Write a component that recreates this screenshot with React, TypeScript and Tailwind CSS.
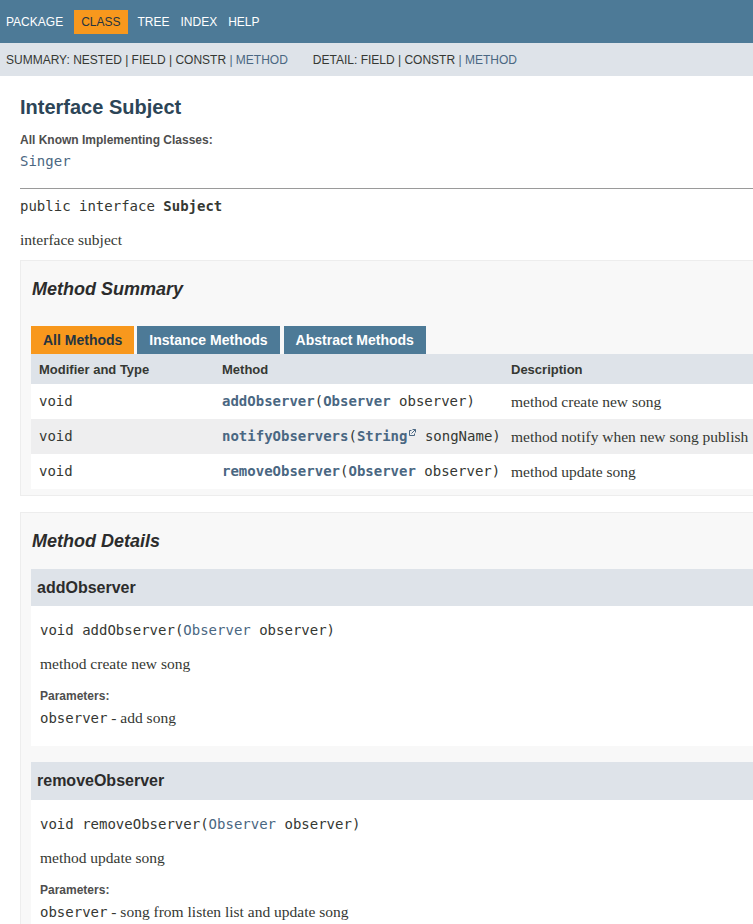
import React from "react";

const SANS = "font-['Liberation_Sans',Arial,sans-serif]";
const MONO = "font-['DejaVu_Sans_Mono',monospace]";
const SERIF = "font-['Liberation_Serif','Times_New_Roman',serif]";

function ExtLink() {
  return (
    <svg width="8" height="8" viewBox="0 0 8 8" className="inline-block self-start mt-[10px] ml-[1px]" fill="none" stroke="#4A6782" strokeWidth="1">
      <path d="M3.5 1.5H1.5V6.5H6.5V4.5" />
      <path d="M4.5 0.5H7.5V3.5" />
      <path d="M7.5 0.5L3.5 4.5" />
    </svg>
  );
}

function Detail({ name, desc, param, headH }: { name: string; desc: string; param: string; headH: string }) {
  return (
    <div className="ml-[10px]">
      <div className={`${headH} bg-[#dee3e9] flex items-center pl-[6px] ${SANS} text-[16px] font-bold text-[#2c2c2c]`}>{name}</div>
      <div className="bg-white pl-[9px] pt-[16px] pb-[19px]">
        <div className={`${MONO} text-[14px] leading-[17px]`}>
          void {name}(<span className="text-[#4A6782]">Observer</span> observer)
        </div>
        <div className={`${SERIF} text-[15.5px] leading-[18px] mt-[16px]`}>{desc}</div>
        <div className={`${SANS} text-[12px] font-bold leading-[14px] mt-[16px] text-[#4E4E4E]`}>Parameters:</div>
        <div className="mt-[6px] leading-[18px]">
          <span className={`${MONO} text-[14px]`}>observer</span>
          <span className={`${SERIF} text-[15.5px]`}> - {param}</span>
        </div>
      </div>
    </div>
  );
}

export default function App() {
  const rows = [
    {
      bg: "bg-white",
      name: "addObserver",
      params: (
        <>
          <span className="font-bold text-[#4A6782]">Observer</span>
          <span>&nbsp;observer)</span>
        </>
      ),
      desc: "method create new song",
    },
    {
      bg: "bg-[#eeeeef]",
      name: "notifyObservers",
      params: (
        <>
          <span className="font-bold text-[#4A6782]">String</span>
          <ExtLink />
          <span>&nbsp;songName)</span>
        </>
      ),
      desc: "method notify when new song publish",
    },
    {
      bg: "bg-white",
      name: "removeObserver",
      params: (
        <>
          <span className="font-bold text-[#4A6782]">Observer</span>
          <span>&nbsp;observer)</span>
        </>
      ),
      desc: "method update song",
    },
  ];

  return (
    <div className={`w-[753px] h-[924px] bg-white text-[#353833] ${SANS} overflow-hidden`}>
      {/* top nav */}
      <div className="h-[43px] bg-[#4D7A97] flex items-center gap-[5px] text-[12px] text-white">
        <div className="px-[6px] py-[5px] leading-[14px]">PACKAGE</div>
        <div className="px-[7px] py-[5px] leading-[14px] bg-[#F8981D] text-[#253441]">CLASS</div>
        <div className="pl-[5px] pr-[4px] py-[5px] leading-[14px]">TREE</div>
        <div className="px-[2px] py-[5px] leading-[14px]">INDEX</div>
        <div className="px-[4px] py-[5px] leading-[14px]">HELP</div>
      </div>
      {/* sub nav */}
      <div className="h-[33px] bg-[#dee3e9] flex items-center pl-[6px] text-[12px] whitespace-nowrap">
        <div>
          SUMMARY: NESTED | FIELD | CONSTR <span className="text-[#4A6782]">| METHOD</span>
        </div>
        <div className="ml-[25px]">
          DETAIL: FIELD | CONSTR <span className="text-[#4A6782]">| METHOD</span>
        </div>
      </div>

      <div className="pl-[20px]">
        <div className="mt-[20px] text-[20px] font-bold leading-[23px] text-[#2c4557]">Interface Subject</div>
        <div className="mt-[14px] text-[12px] font-bold leading-[14px] text-[#4E4E4E]">All Known Implementing Classes:</div>
        <div className={`mt-[6px] ${MONO} text-[14px] leading-[17px] text-[#4A6782]`}>Singer</div>
        <div className="mt-[18px] border-t border-[#9a9a9a]"></div>
        <div className={`mt-[9px] ${MONO} text-[14px] leading-[17px]`}>
          public interface <span className="font-bold">Subject</span>
        </div>
        <div className={`mt-[16px] ${SERIF} text-[15.5px] leading-[18px]`}>interface subject</div>

        {/* Method summary */}
        <div className="mt-[11px] bg-[#f8f8f8] border-l border-t border-b border-[#ededed] pb-[6px]">
          <div className="pt-[18px] pl-[11px] text-[18px] font-bold italic leading-[21px] text-[#2c2c2c]">Method Summary</div>
          <div className="mt-[26px] ml-[10px] flex gap-[3px] text-[14px] font-bold">
            <div className="h-[28px] px-[12px] flex items-center bg-[#F8981D] text-[#253441]">All Methods</div>
            <div className="h-[28px] px-[12px] flex items-center bg-[#4D7A97] text-white">Instance Methods</div>
            <div className="h-[28px] px-[12px] flex items-center bg-[#4D7A97] text-white ml-[1px]">Abstract Methods</div>
          </div>
          <div className="ml-[10px] grid grid-cols-[183px_289px_1fr]">
            <div className="h-[30px] bg-[#dee3e9] flex items-center pl-[8px] pt-[2px] text-[13px] font-bold">Modifier and Type</div>
            <div className="h-[30px] bg-[#dee3e9] flex items-center pl-[8px] pt-[2px] text-[13px] font-bold">Method</div>
            <div className="h-[30px] bg-[#dee3e9] flex items-center pl-[8px] pt-[2px] text-[13px] font-bold">Description</div>
            {rows.map((r) => (
              <React.Fragment key={r.name}>
                <div className={`${r.bg} h-[35px] flex items-center pl-[8px] ${MONO} text-[14px]`}>void</div>
                <div className={`${r.bg} h-[35px] flex items-center pl-[8px] ${MONO} text-[14px] whitespace-nowrap`}>
                  <span className="font-bold text-[#4A6782]">{r.name}</span>
                  <span>(</span>
                  {r.params}
                </div>
                <div className={`${r.bg} h-[35px] flex items-center pl-[8px] ${SERIF} text-[15.5px] whitespace-nowrap`}>{r.desc}</div>
              </React.Fragment>
            ))}
          </div>
        </div>

        {/* Method details */}
        <div className="mt-[16px] bg-[#f8f8f8] border-l border-t border-[#ededed] pb-[40px]">
          <div className="pt-[18px] pl-[11px] text-[18px] font-bold italic leading-[21px] text-[#2c2c2c]">Method Details</div>
          <div className="mt-[17px]">
            <Detail name="addObserver" desc="method create new song" param="add song" headH="h-[37px]" />
          </div>
          <div className="mt-[16px]">
            <Detail name="removeObserver" desc="method update song" param="song from listen list and update song" headH="h-[38px]" />
          </div>
        </div>
      </div>
    </div>
  );
}
